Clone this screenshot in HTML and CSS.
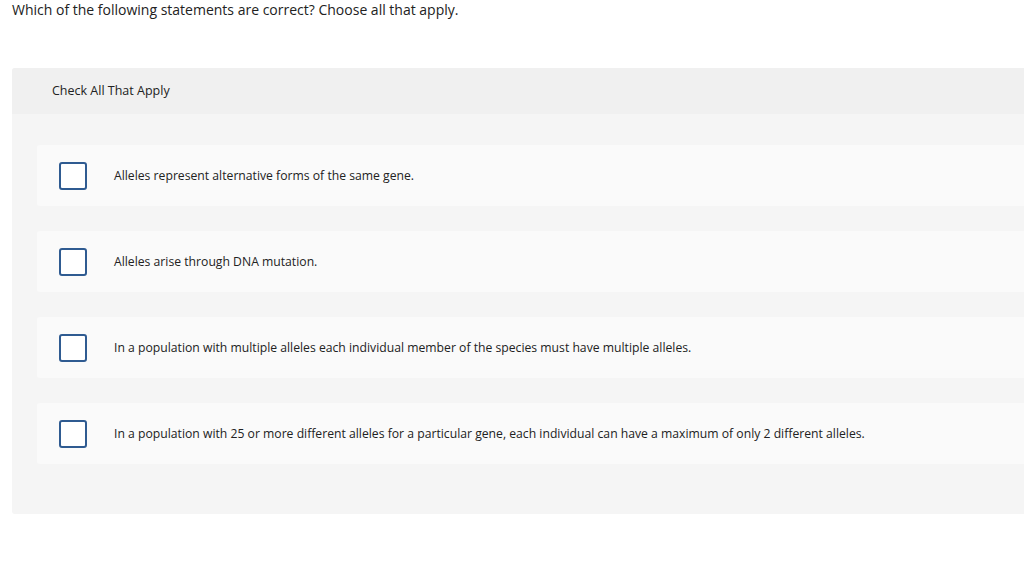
FILE: index.html
```html
<!DOCTYPE html>
<html lang="en">
<head>
<meta charset="utf-8">
<title>Check All That Apply</title>
<link rel="stylesheet" href="styles.css">
</head>
<body>
<p class="prompt">Which of the following statements are correct? Choose all that apply.</p>
<section class="panel">
  <div class="panel-head">Check All That Apply</div>
  <div class="panel-body">
    <label class="option"><span class="box"></span><span class="opt-text">Alleles represent alternative forms of the same gene.</span></label>
    <label class="option"><span class="box"></span><span class="opt-text">Alleles arise through DNA mutation.</span></label>
    <label class="option"><span class="box"></span><span class="opt-text">In a population with multiple alleles each individual member of the species must have multiple alleles.</span></label>
    <label class="option"><span class="box"></span><span class="opt-text">In a population with 25 or more different alleles for a particular gene, each individual can have a maximum of only 2 different alleles.</span></label>
  </div>
</section>
</body>
</html>
```

FILE: styles.css
```css
html, body {
  margin: 0;
  padding: 0;
  background: #ffffff;
}
body {
  font-family: "Open Sans", Arial, sans-serif;
  color: #1f1f1f;
  width: 1024px;
  overflow: hidden;
}
.prompt {
  margin: 0;
  padding: 1px 0 0 12px;
  font-size: 14px;
  line-height: 18px;
  color: #222;
}
.panel {
  margin: 49px 0 0 12px;
  width: 1040px;
  background: #f5f5f5;
  border-radius: 3px;
  overflow: hidden;
}
.panel-head {
  background: #f0f0f0;
  height: 46px;
  padding-left: 40px;
  font-size: 12.5px;
  line-height: 46px;
  color: #222;
}
.panel-body {
  display: flex;
  flex-direction: column;
  gap: 25px;
  padding: 31px 0 50px 25px;
}
.option {
  display: flex;
  align-items: center;
  height: 61px;
  background: #fafafa;
  border-radius: 3px;
  padding-left: 22px;
}
.box {
  width: 24px;
  height: 24px;
  border: 2px solid #2f5b91;
  border-radius: 3px;
  background: #fff;
  flex: none;
}
.opt-text {
  margin-left: 27px;
  font-size: 12.2px;
  color: #222;
}
```
